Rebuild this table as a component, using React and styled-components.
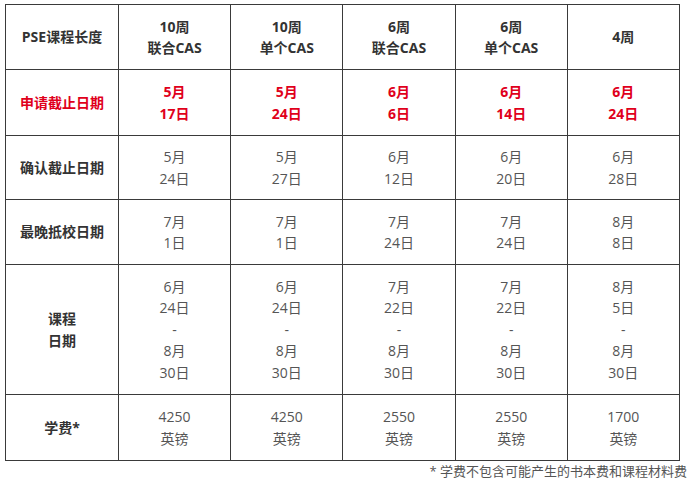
import React from 'react'
import styled, { createGlobalStyle } from 'styled-components'

const GlobalStyle = createGlobalStyle`
    body {
        margin: 0;
        background: #ffffff;
        font-family: "Open Sans", "Noto Sans CJK SC", sans-serif;
    }
`

const Page = styled.div`
    width: 682px;
    padding: 4px 0 0 5px;
`

const Table = styled.table`
    width: 675px;
    border-collapse: collapse;
    table-layout: fixed;
`

const Row = styled.tr`
    height: ${(props) => props.$height}px;
`

const Cell = styled.td`
    border: 1px solid #3a3a3a;
    padding: 0;
    text-align: center;
    vertical-align: middle;
    font-size: 14px;
    line-height: 21.5px;
    font-weight: ${(props) => (props.$bold ? 700 : 400)};
    color: ${(props) => (props.$red ? '#e0001b' : props.$bold ? '#333333' : '#555555')};
`

const Line = styled.div`
    white-space: nowrap;
`

const Footnote = styled.p`
    margin: 0;
    text-align: right;
    font-size: 13px;
    line-height: 20px;
    color: #555555;
`

const rows = [
    {
        label: ['PSE课程长度'],
        height: 65,
        bold: true,
        cells: [['10周', '联合CAS'], ['10周', '单个CAS'], ['6周', '联合CAS'], ['6周', '单个CAS'], ['4周']],
    },
    {
        label: ['申请截止日期'],
        height: 66,
        bold: true,
        red: true,
        cells: [['5月', '17日'], ['5月', '24日'], ['6月', '6日'], ['6月', '14日'], ['6月', '24日']],
    },
    {
        label: ['确认截止日期'],
        height: 64,
        cells: [['5月', '24日'], ['5月', '27日'], ['6月', '12日'], ['6月', '20日'], ['6月', '28日']],
    },
    {
        label: ['最晚抵校日期'],
        height: 65,
        cells: [['7月', '1日'], ['7月', '1日'], ['7月', '24日'], ['7月', '24日'], ['8月', '8日']],
    },
    {
        label: ['课程', '日期'],
        height: 130,
        cells: [
            ['6月', '24日', '-', '8月', '30日'],
            ['6月', '24日', '-', '8月', '30日'],
            ['7月', '22日', '-', '8月', '30日'],
            ['7月', '22日', '-', '8月', '30日'],
            ['8月', '5日', '-', '8月', '30日'],
        ],
    },
    {
        label: ['学费*'],
        height: 66,
        cells: [['4250', '英镑'], ['4250', '英镑'], ['2550', '英镑'], ['2550', '英镑'], ['1700', '英镑']],
    },
]

const Lines = ({ items }) => items.map((text, i) => <Line key={i}>{text}</Line>)

export default function App() {
    return (
        <Page>
            <GlobalStyle />
            <Table>
                <colgroup>
                    <col style={{ width: 113 }} />
                    <col />
                    <col />
                    <col />
                    <col />
                    <col />
                </colgroup>
                <tbody>
                    {rows.map((row, r) => (
                        <Row key={r} $height={row.height}>
                            <Cell $bold $red={row.red}>
                                <Lines items={row.label} />
                            </Cell>
                            {row.cells.map((cell, c) => (
                                <Cell key={c} $bold={row.bold} $red={row.red}>
                                    <Lines items={cell} />
                                </Cell>
                            ))}
                        </Row>
                    ))}
                </tbody>
            </Table>
            <Footnote>* 学费不包含可能产生的书本费和课程材料费</Footnote>
        </Page>
    )
}
